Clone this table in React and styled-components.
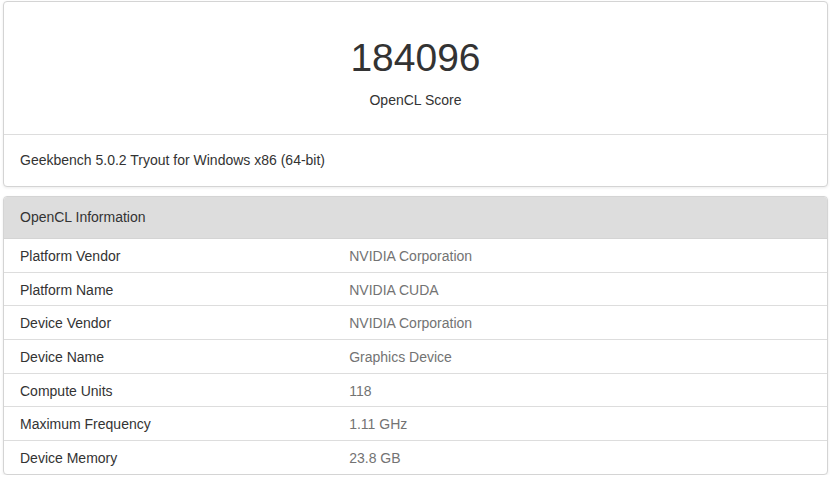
import React from 'react'
import styled, { createGlobalStyle } from 'styled-components'

const GlobalStyle = createGlobalStyle`
  html, body {
    margin: 0;
    padding: 0;
    background: #fff;
  }
  body {
    font-family: "Liberation Sans", Arial, sans-serif;
    font-size: 14px;
    line-height: 20px;
    color: #333;
  }
`

const Page = styled.div`
  padding: 1px 3px 0;
  display: flex;
  flex-direction: column;
  gap: 9px;
`

const Card = styled.div`
  background: #fff;
  border: 1px solid #d4d4d4;
  border-radius: 4px;
  box-shadow: 0 1px 3px rgba(0, 0, 0, 0.08);
  overflow: hidden;
`

const ScoreSection = styled.div`
  padding: 32px 16px 24px;
  text-align: center;
  border-bottom: 1px solid #ddd;
`

const ScoreValue = styled.div`
  font-size: 39px;
  line-height: 47px;
  color: #333;
`

const ScoreLabel = styled.div`
  margin-top: 9px;
  font-size: 14px;
  line-height: 20px;
`

const Platform = styled.div`
  padding: 15px 16px 16px;
`

const CardHeader = styled.div`
  background: #dddddd;
  padding: 10px 16px 11px;
  border-bottom: 1px solid #d4d4d4;
`

const Table = styled.div`
  display: flex;
  flex-direction: column;
`

const Row = styled.div`
  display: grid;
  grid-template-columns: 40% 1fr;
  border-top: ${p => (p.$first ? 'none' : '1px solid #ddd')};
`

const Cell = styled.div`
  padding: 7px 16px 5.67px;
  color: ${p => (p.$muted ? '#737373' : '#333')};
`

const rows = [
  ['Platform Vendor', 'NVIDIA Corporation'],
  ['Platform Name', 'NVIDIA CUDA'],
  ['Device Vendor', 'NVIDIA Corporation'],
  ['Device Name', 'Graphics Device'],
  ['Compute Units', '118'],
  ['Maximum Frequency', '1.11 GHz'],
  ['Device Memory', '23.8 GB'],
]

export default function App() {
  return (
    <>
      <GlobalStyle />
      <Page>
        <Card>
          <ScoreSection>
            <ScoreValue>184096</ScoreValue>
            <ScoreLabel>OpenCL Score</ScoreLabel>
          </ScoreSection>
          <Platform>Geekbench 5.0.2 Tryout for Windows x86 (64-bit)</Platform>
        </Card>
        <Card>
          <CardHeader>OpenCL Information</CardHeader>
          <Table>
            {rows.map(([label, value], i) => (
              <Row key={label} $first={i === 0}>
                <Cell>{label}</Cell>
                <Cell $muted>{value}</Cell>
              </Row>
            ))}
          </Table>
        </Card>
      </Page>
    </>
  )
}
